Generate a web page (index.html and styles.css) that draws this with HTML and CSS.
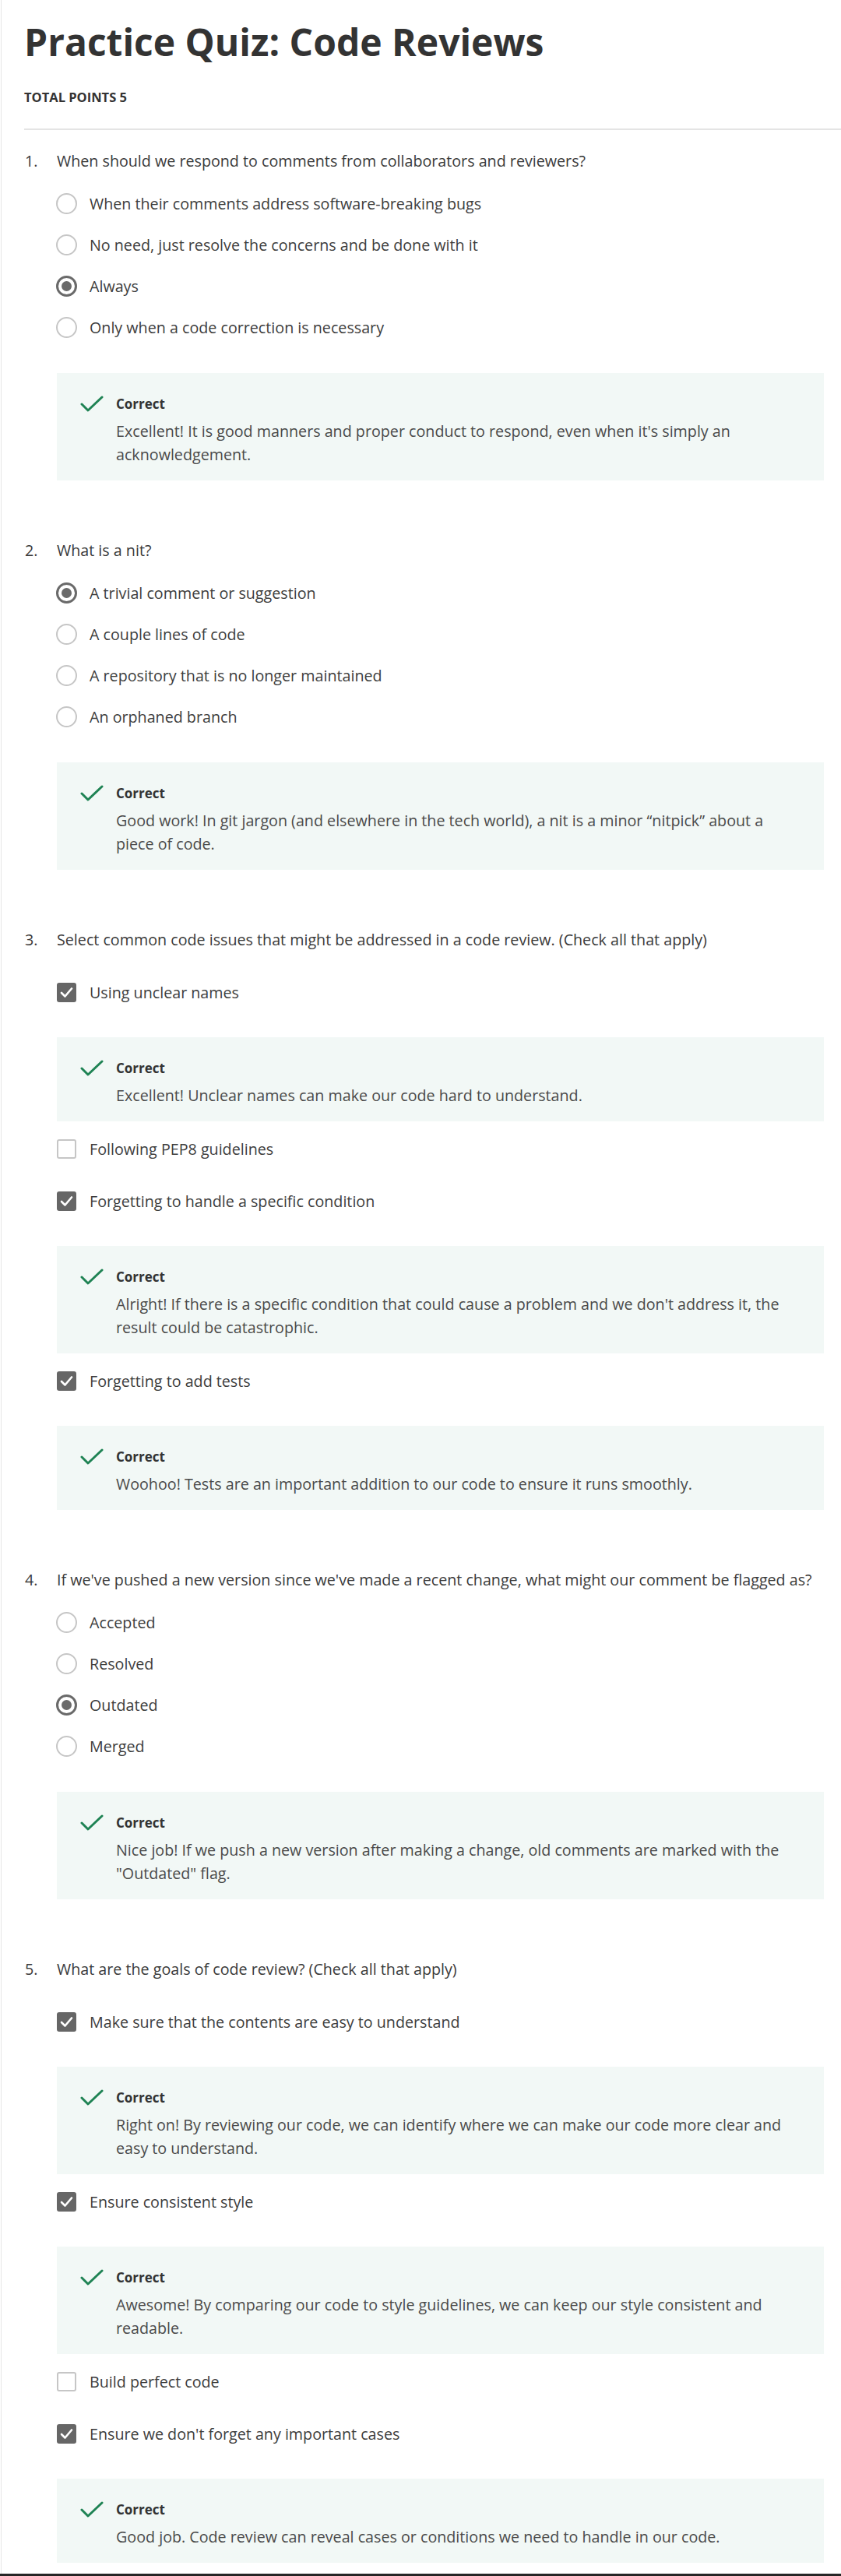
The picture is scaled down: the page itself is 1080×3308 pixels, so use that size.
FILE: index.html
```html
<!DOCTYPE html>
<html lang="en">
<head>
<meta charset="utf-8">
<title>Practice Quiz: Code Reviews</title>
<link rel="stylesheet" href="styles.css">
</head>
<body>
<div class="page">
  <header class="quiz-header">
    <h1 class="title">Practice Quiz: Code Reviews</h1>
    <div class="points">TOTAL POINTS 5</div>
  </header>

  <ol class="questions">
    <li class="question">
      <div class="q-head"><span class="q-num">1.</span><span class="q-text">When should we respond to comments from collaborators and reviewers?</span></div>
      <div class="q-body">
        <ul class="options radios">
          <li class="option"><span class="radio"></span><span class="opt-text">When their comments address software-breaking bugs</span></li>
          <li class="option"><span class="radio"></span><span class="opt-text">No need, just resolve the concerns and be done with it</span></li>
          <li class="option"><span class="radio selected"></span><span class="opt-text">Always</span></li>
          <li class="option"><span class="radio"></span><span class="opt-text">Only when a code correction is necessary</span></li>
        </ul>
        <div class="feedback after-radios">
          <span class="fb-icon"><svg viewBox="0 0 30 24" width="30" height="24"><polyline points="2,12 10,20 28,3" /></svg></span>
          <div class="fb-content">
            <div class="fb-title">Correct</div>
            <div class="fb-text">Excellent! It is good manners and proper conduct to respond, even when it's simply an acknowledgement.</div>
          </div>
        </div>
      </div>
    </li>

    <li class="question">
      <div class="q-head"><span class="q-num">2.</span><span class="q-text">What is a nit?</span></div>
      <div class="q-body">
        <ul class="options radios">
          <li class="option"><span class="radio selected"></span><span class="opt-text">A trivial comment or suggestion</span></li>
          <li class="option"><span class="radio"></span><span class="opt-text">A couple lines of code</span></li>
          <li class="option"><span class="radio"></span><span class="opt-text">A repository that is no longer maintained</span></li>
          <li class="option"><span class="radio"></span><span class="opt-text">An orphaned branch</span></li>
        </ul>
        <div class="feedback after-radios">
          <span class="fb-icon"><svg viewBox="0 0 30 24" width="30" height="24"><polyline points="2,12 10,20 28,3" /></svg></span>
          <div class="fb-content">
            <div class="fb-title">Correct</div>
            <div class="fb-text">Good work! In git jargon (and elsewhere in the tech world), a nit is a minor “nitpick” about a piece of code.</div>
          </div>
        </div>
      </div>
    </li>

    <li class="question">
      <div class="q-head"><span class="q-num">3.</span><span class="q-text">Select common code issues that might be addressed in a code review. (Check all that apply)</span></div>
      <div class="q-body">
        <ul class="options checks">
          <li class="option check-opt">
            <div class="check-row"><span class="checkbox checked"><svg viewBox="0 0 25 25" width="25" height="25"><polyline points="6,13 10.5,17.5 19,7.5" /></svg></span><span class="opt-text">Using unclear names</span></div>
            <div class="feedback">
              <span class="fb-icon"><svg viewBox="0 0 30 24" width="30" height="24"><polyline points="2,12 10,20 28,3" /></svg></span>
              <div class="fb-content">
                <div class="fb-title">Correct</div>
                <div class="fb-text">Excellent! Unclear names can make our code hard to understand.</div>
              </div>
            </div>
          </li>
          <li class="option check-opt">
            <div class="check-row"><span class="checkbox"></span><span class="opt-text">Following PEP8 guidelines</span></div>
          </li>
          <li class="option check-opt">
            <div class="check-row"><span class="checkbox checked"><svg viewBox="0 0 25 25" width="25" height="25"><polyline points="6,13 10.5,17.5 19,7.5" /></svg></span><span class="opt-text">Forgetting to handle a specific condition</span></div>
            <div class="feedback">
              <span class="fb-icon"><svg viewBox="0 0 30 24" width="30" height="24"><polyline points="2,12 10,20 28,3" /></svg></span>
              <div class="fb-content">
                <div class="fb-title">Correct</div>
                <div class="fb-text">Alright! If there is a specific condition that could cause a problem and we don't address it, the result could be catastrophic.</div>
              </div>
            </div>
          </li>
          <li class="option check-opt">
            <div class="check-row"><span class="checkbox checked"><svg viewBox="0 0 25 25" width="25" height="25"><polyline points="6,13 10.5,17.5 19,7.5" /></svg></span><span class="opt-text">Forgetting to add tests</span></div>
            <div class="feedback">
              <span class="fb-icon"><svg viewBox="0 0 30 24" width="30" height="24"><polyline points="2,12 10,20 28,3" /></svg></span>
              <div class="fb-content">
                <div class="fb-title">Correct</div>
                <div class="fb-text">Woohoo! Tests are an important addition to our code to ensure it runs smoothly.</div>
              </div>
            </div>
          </li>
        </ul>
      </div>
    </li>

    <li class="question">
      <div class="q-head"><span class="q-num">4.</span><span class="q-text">If we've pushed a new version since we've made a recent change, what might our comment be flagged as?</span></div>
      <div class="q-body">
        <ul class="options radios">
          <li class="option"><span class="radio"></span><span class="opt-text">Accepted</span></li>
          <li class="option"><span class="radio"></span><span class="opt-text">Resolved</span></li>
          <li class="option"><span class="radio selected"></span><span class="opt-text">Outdated</span></li>
          <li class="option"><span class="radio"></span><span class="opt-text">Merged</span></li>
        </ul>
        <div class="feedback after-radios">
          <span class="fb-icon"><svg viewBox="0 0 30 24" width="30" height="24"><polyline points="2,12 10,20 28,3" /></svg></span>
          <div class="fb-content">
            <div class="fb-title">Correct</div>
            <div class="fb-text">Nice job! If we push a new version after making a change, old comments are marked with the "Outdated" flag.</div>
          </div>
        </div>
      </div>
    </li>

    <li class="question last">
      <div class="q-head"><span class="q-num">5.</span><span class="q-text">What are the goals of code review? (Check all that apply)</span></div>
      <div class="q-body">
        <ul class="options checks">
          <li class="option check-opt">
            <div class="check-row"><span class="checkbox checked"><svg viewBox="0 0 25 25" width="25" height="25"><polyline points="6,13 10.5,17.5 19,7.5" /></svg></span><span class="opt-text">Make sure that the contents are easy to understand</span></div>
            <div class="feedback">
              <span class="fb-icon"><svg viewBox="0 0 30 24" width="30" height="24"><polyline points="2,12 10,20 28,3" /></svg></span>
              <div class="fb-content">
                <div class="fb-title">Correct</div>
                <div class="fb-text">Right on! By reviewing our code, we can identify where we can make our code more clear and easy to understand.</div>
              </div>
            </div>
          </li>
          <li class="option check-opt">
            <div class="check-row"><span class="checkbox checked"><svg viewBox="0 0 25 25" width="25" height="25"><polyline points="6,13 10.5,17.5 19,7.5" /></svg></span><span class="opt-text">Ensure consistent style</span></div>
            <div class="feedback">
              <span class="fb-icon"><svg viewBox="0 0 30 24" width="30" height="24"><polyline points="2,12 10,20 28,3" /></svg></span>
              <div class="fb-content">
                <div class="fb-title">Correct</div>
                <div class="fb-text">Awesome! By comparing our code to style guidelines, we can keep our style consistent and readable.</div>
              </div>
            </div>
          </li>
          <li class="option check-opt">
            <div class="check-row"><span class="checkbox"></span><span class="opt-text">Build perfect code</span></div>
          </li>
          <li class="option check-opt">
            <div class="check-row"><span class="checkbox checked"><svg viewBox="0 0 25 25" width="25" height="25"><polyline points="6,13 10.5,17.5 19,7.5" /></svg></span><span class="opt-text">Ensure we don't forget any important cases</span></div>
            <div class="feedback">
              <span class="fb-icon"><svg viewBox="0 0 30 24" width="30" height="24"><polyline points="2,12 10,20 28,3" /></svg></span>
              <div class="fb-content">
                <div class="fb-title">Correct</div>
                <div class="fb-text">Good job. Code review can reveal cases or conditions we need to handle in our code.</div>
              </div>
            </div>
          </li>
        </ul>
      </div>
    </li>
  </ol>
</div>
<div class="bottom-bar"></div>
</body>
</html>
```

FILE: styles.css
```css
* { box-sizing: border-box; }

html, body {
  margin: 0;
  padding: 0;
  background: #ffffff;
}

body {
  font-family: "Open Sans", "Noto Sans", "Liberation Sans", sans-serif;
  color: #3a3a3a;
  height: 3308px;
  display: flex;
  flex-direction: column;
}

.page {
  flex: 1;
  margin-left: 1px;
  border-left: 1px solid #e6e6e6;
  padding-left: 29px;
}

.bottom-bar {
  height: 3px;
  background: #262626;
}

/* header */
.quiz-header {
  padding-top: 22px;
  border-bottom: 2px solid #e4e4e4;
  padding-bottom: 28px;
}

.title {
  margin: 0;
  font-size: 48px;
  line-height: 64px;
  font-weight: 700;
  color: #333333;
}

.points {
  margin-top: 27px;
  font-size: 16.5px;
  line-height: 24px;
  font-weight: 700;
  color: #333333;
}

/* questions */
.questions {
  list-style: none;
  margin: 26px 0 0;
  padding: 0;
}

.question {
  margin-bottom: 76px;
}

.question.last {
  margin-bottom: 0;
}

.q-head {
  display: flex;
  font-size: 19.7px;
  line-height: 28px;
  color: #3a3a3a;
}

.q-num {
  width: 42px;
  flex: none;
  padding-left: 1px;
}

.q-body {
  margin-left: 42px;
  margin-right: 22px;
}

.options {
  list-style: none;
  margin: 0;
  padding: 0;
}

.options.radios {
  margin-top: 14px;
}

.options.checks {
  margin-top: 20px;
}

.option {
  font-size: 19.7px;
  line-height: 28px;
  color: #3d3d3d;
}

.radios .option {
  height: 53px;
  display: flex;
  align-items: center;
  gap: 16px;
}

.check-row {
  height: 67px;
  display: flex;
  align-items: center;
  gap: 16px;
}

/* radio */
.radio {
  flex: none;
  width: 27px;
  height: 27px;
  margin-left: -1px;
  border-radius: 50%;
  border: 2px solid #c6c6c6;
  background: #ffffff;
  display: flex;
  align-items: center;
  justify-content: center;
}

.radio.selected {
  border: 3px solid #6a6a6a;
}

.radio.selected::after {
  content: "";
  width: 13px;
  height: 13px;
  border-radius: 50%;
  background: #6a6a6a;
}

/* checkbox */
.checkbox {
  flex: none;
  width: 25px;
  height: 25px;
  margin-right: 1px;
  border-radius: 3px;
  border: 2px solid #c6c6c6;
  background: #ffffff;
  display: flex;
}

.checkbox.checked {
  border: none;
  background: #666666;
}

.checkbox svg polyline {
  fill: none;
  stroke: #ffffff;
  stroke-width: 2.6;
  stroke-linecap: round;
  stroke-linejoin: round;
}

/* feedback */
.feedback {
  display: flex;
  gap: 16px;
  background: #f2f8f6;
  padding: 28px 30px 18px 30px;
  margin-top: 24px;
  margin-bottom: 2px;
}

.feedback.after-radios {
  margin-top: 32px;
  margin-bottom: 0;
}

.fb-icon {
  flex: none;
  width: 30px;
  height: 24px;
  display: flex;
  align-items: center;
}

.fb-icon svg polyline {
  fill: none;
  stroke: #1f8354;
  stroke-width: 3;
  stroke-linecap: round;
  stroke-linejoin: round;
}

.fb-content {
  flex: 1;
  min-width: 0;
}

.fb-title {
  font-size: 17px;
  line-height: 24px;
  font-weight: 700;
  color: #333333;
}

.fb-text {
  margin-top: 8px;
  font-size: 19.7px;
  line-height: 30px;
  color: #4a4a4a;
}
```
